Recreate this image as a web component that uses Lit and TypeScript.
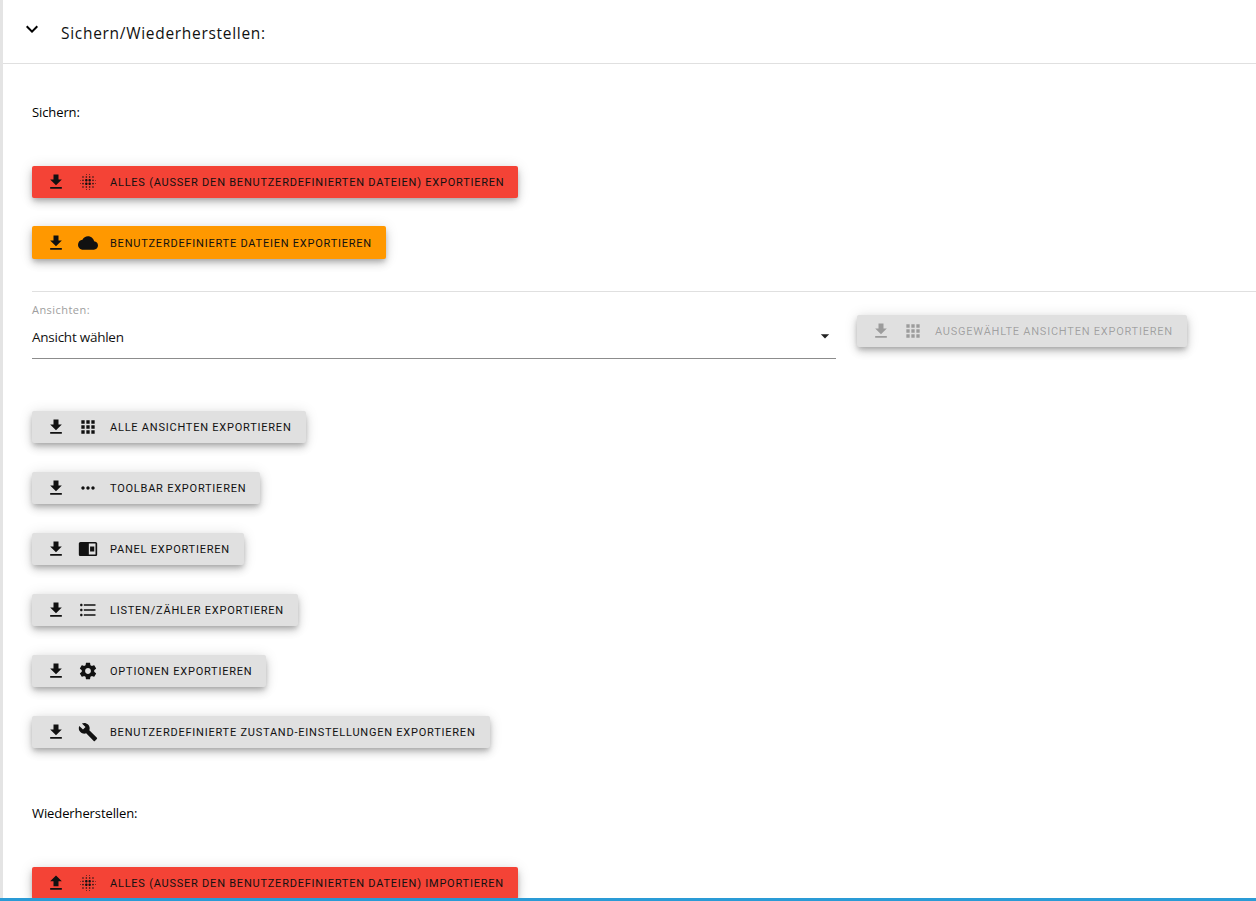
import { LitElement, html, css, svg } from "lit";
import { customElement } from "lit/decorators.js";

const P: Record<string, any> = {
  down: svg`<path d="M19 9h-4V3H9v6H5l7 7 7-7zM5 18v2h14v-2H5z"/>`,
  up: svg`<path d="M9 16h6v-6h4l-7-7-7 7h4zm-4 2h14v2H5z"/>`,
  cloud: svg`<path d="M19.35 10.04C18.67 6.59 15.64 4 12 4 9.11 4 6.6 5.64 5.35 8.04 2.34 8.36 0 10.91 0 14c0 3.31 2.69 6 6 6h13c2.76 0 5-2.24 5-5 0-2.64-2.05-4.78-4.65-4.96z"/>`,
  apps: svg`<path d="M4 8h4V4H4v4zm6 12h4v-4h-4v4zm-6 0h4v-4H4v4zm0-6h4v-4H4v4zm6 0h4v-4h-4v4zm6-10v4h4V4h-4zm-6 4h4V4h-4v4zm6 6h4v-4h-4v4zm0 6h4v-4h-4v4z"/>`,
  more: svg`<path d="M6 10c-1.1 0-2 .9-2 2s.9 2 2 2 2-.9 2-2-.9-2-2-2zm12 0c-1.1 0-2 .9-2 2s.9 2 2 2 2-.9 2-2-.9-2-2-2zm-6 0c-1.1 0-2 .9-2 2s.9 2 2 2 2-.9 2-2-.9-2-2-2z"/>`,
  panel: svg`<path fill-rule="evenodd" d="M3 3.5h18c1.1 0 2 .9 2 2v13c0 1.1-.9 2-2 2H3c-1.1 0-2-.9-2-2v-13c0-1.1.9-2 2-2zM13 5.5v13h8v-13h-8zM14.5 9h5v6h-5V9z"/>`,
  list: svg`<path d="M4 10.5c-.83 0-1.5.67-1.5 1.5s.67 1.5 1.5 1.5 1.5-.67 1.5-1.5-.67-1.5-1.5-1.5zm0-6c-.83 0-1.5.67-1.5 1.5S3.17 7.5 4 7.5 5.5 6.83 5.5 6 4.83 4.5 4 4.5zm0 12c-.83 0-1.5.68-1.5 1.5s.68 1.5 1.5 1.5 1.5-.68 1.5-1.5-.67-1.5-1.5-1.5zM7 19h14v-2H7v2zm0-6h14v-2H7v2zm0-8v2h14V5H7z"/>`,
  gear: svg`<path d="M19.43 12.98c.04-.32.07-.64.07-.98s-.03-.66-.07-.98l2.11-1.65c.19-.15.24-.42.12-.64l-2-3.46c-.12-.22-.39-.3-.61-.22l-2.49 1c-.52-.4-1.08-.73-1.69-.98l-.38-2.65C14.46 2.18 14.25 2 14 2h-4c-.25 0-.46.18-.49.42l-.38 2.65c-.61.25-1.17.59-1.69.98l-2.49-1c-.23-.09-.49 0-.61.22l-2 3.46c-.13.22-.07.49.12.64l2.11 1.65c-.04.32-.07.65-.07.98s.03.66.07.98l-2.11 1.65c-.19.15-.24.42-.12.64l2 3.46c.12.22.39.3.61.22l2.49-1c.52.4 1.08.73 1.69.98l.38 2.65c.03.24.24.42.49.42h4c.25 0 .46-.18.49-.42l.38-2.65c.61-.25 1.17-.59 1.69-.98l2.49 1c.23.09.49 0 .61-.22l2-3.46c.12-.22.07-.49-.12-.64l-2.11-1.65zM12 15.5c-1.93 0-3.5-1.57-3.5-3.5s1.57-3.5 3.5-3.5 3.5 1.57 3.5 3.5-1.57 3.5-3.5 3.5z"/>`,
  wrench: svg`<path d="M22.7 19l-9.1-9.1c.9-2.3.4-5-1.5-6.9-2-2-5-2.4-7.4-1.3L9 6 6 9 1.6 4.7C.4 7.1.9 10.1 2.9 12.1c1.9 1.9 4.6 2.4 6.9 1.5l9.1 9.1c.4.4 1 .4 1.4 0l2.3-2.3c.5-.4.5-1.1.1-1.4z"/>`,
  blur: svg`<path d="M6 13c-.55 0-1 .45-1 1s.45 1 1 1 1-.45 1-1-.45-1-1-1zm0 4c-.55 0-1 .45-1 1s.45 1 1 1 1-.45 1-1-.45-1-1-1zm0-8c-.55 0-1 .45-1 1s.45 1 1 1 1-.45 1-1-.45-1-1-1zm-3 .5c-.28 0-.5.22-.5.5s.22.5.5.5.5-.22.5-.5-.22-.5-.5-.5zM6 5c-.55 0-1 .45-1 1s.45 1 1 1 1-.45 1-1-.45-1-1-1zm15 5.5c.28 0 .5-.22.5-.5s-.22-.5-.5-.5-.5.22-.5.5.22.5.5.5zM14 7c.55 0 1-.45 1-1s-.45-1-1-1-1 .45-1 1 .45 1 1 1zm0-3.5c.28 0 .5-.22.5-.5s-.22-.5-.5-.5-.5.22-.5.5.22.5.5.5zm-11 10c-.28 0-.5.22-.5.5s.22.5.5.5.5-.22.5-.5-.22-.5-.5-.5zm7 7c-.28 0-.5.22-.5.5s.22.5.5.5.5-.22.5-.5-.22-.5-.5-.5zm0-17c.28 0 .5-.22.5-.5s-.22-.5-.5-.5-.5.22-.5.5.22.5.5.5zM10 7c.55 0 1-.45 1-1s-.45-1-1-1-1 .45-1 1 .45 1 1 1zm0 5.5c-.83 0-1.5.67-1.5 1.5s.67 1.5 1.5 1.5 1.5-.67 1.5-1.5-.67-1.5-1.5-1.5zm8 .5c-.55 0-1 .45-1 1s.45 1 1 1 1-.45 1-1-.45-1-1-1zm0 4c-.55 0-1 .45-1 1s.45 1 1 1 1-.45 1-1-.45-1-1-1zm0-8c-.55 0-1 .45-1 1s.45 1 1 1 1-.45 1-1-.45-1-1-1zm0-4c-.55 0-1 .45-1 1s.45 1 1 1 1-.45 1-1-.45-1-1-1zm3 8.5c-.28 0-.5.22-.5.5s.22.5.5.5.5-.22.5-.5-.22-.5-.5-.5zM14 17c-.55 0-1 .45-1 1s.45 1 1 1 1-.45 1-1-.45-1-1-1zm0 3.5c-.28 0-.5.22-.5.5s.22.5.5.5.5-.22.5-.5-.22-.5-.5-.5zm-4-12c-.83 0-1.5.67-1.5 1.5s.67 1.5 1.5 1.5 1.5-.67 1.5-1.5-.67-1.5-1.5-1.5zm0 8.5c-.55 0-1 .45-1 1s.45 1 1 1 1-.45 1-1-.45-1-1-1zm4-4.5c-.83 0-1.5.67-1.5 1.5s.67 1.5 1.5 1.5 1.5-.67 1.5-1.5-.67-1.5-1.5-1.5zm0-4c-.83 0-1.5.67-1.5 1.5s.67 1.5 1.5 1.5 1.5-.67 1.5-1.5-.67-1.5-1.5-1.5z"/>`,
  chevron: svg`<path d="M16.59 8.59L12 13.17 7.41 8.59 6 10l6 6 6-6z"/>`,
  caret: svg`<path d="M7 10l5 5 5-5z"/>`,
};

const icon = (n: string, cls = "ic") => html`<svg class=${cls} viewBox="0 0 24 24" fill="currentColor">${P[n]}</svg>`;

type B = { a: string; b: string; t: string; c?: string };
const GREY: B[] = [
  { a: "down", b: "apps", t: "Alle Ansichten exportieren" },
  { a: "down", b: "more", t: "Toolbar exportieren" },
  { a: "down", b: "panel", t: "Panel exportieren" },
  { a: "down", b: "list", t: "Listen/Zähler exportieren" },
  { a: "down", b: "gear", t: "Optionen exportieren" },
  { a: "down", b: "wrench", t: "Benutzerdefinierte Zustand-Einstellungen exportieren" },
];

@customElement("app-root")
export class AppRoot extends LitElement {
  static styles = css`
    :host { display: flex; flex-direction: column; height: 901px; overflow: hidden; background: #fff; color: #000; font-family: "Open Sans", "Noto Sans", sans-serif; }
    * { box-sizing: border-box; }
    .main { flex: 1; min-height: 0; overflow: hidden; border-left: 3px solid #e4e4e4; }
    .bar { height: 3px; flex: none; background: #2a9bd6; }
    .head { height: 64px; border-bottom: 1px solid #e0e0e0; display: flex; align-items: center; padding-left: 17px; }
    .chev { width: 24px; height: 24px; margin-top: -6px; flex: none; }
    .title { margin-left: 17px; font-size: 15.5px; letter-spacing: .7px; color: #111; margin-top: 2px; }
    .body { padding: 0 0 0 29px; }
    .label { font-size: 13px; line-height: 18px; height: 18px; letter-spacing: -.1px; }
    .l1 { margin-top: 39px; margin-bottom: 45px; }
    .l2 { margin-top: 56px; margin-bottom: 45px; }
    .btn { display: inline-flex; align-items: center; height: 32px; padding: 0 14px 0 14px; border-radius: 2px; border: 0; font-family: Roboto, sans-serif; font-size: 11px; letter-spacing: .77px; text-transform: uppercase; white-space: nowrap; background: #e0e0e0; color: #111;
      box-shadow: 0 3px 5px -1px rgba(0,0,0,.2), 0 5px 8px 0 rgba(0,0,0,.14), 0 1px 14px 0 rgba(0,0,0,.12); }
    .ic { width: 20px; height: 20px; flex: none; }
    .ic + .ic { margin-left: 12px; }
    .ic + span { margin-left: 12px; }
    .red { background: #f44336; }
    .orange { background: #ff9800; height: 33px; padding-top: 1px; }
    .dis { background: #e0e0e0; color: rgba(0,0,0,.3); }
    .stack { display: flex; flex-direction: column; align-items: flex-start; }
    .g1 { gap: 28px; }
    .g2 { gap: 29px; margin-top: 52px; }
    hr { border: 0; border-top: 1px solid #e0e0e0; margin: 32px 0 0 0; }
    .row { display: flex; align-items: flex-start; gap: 21px; margin-top: 12px; }
    .sel { width: 804px; height: 55px; border-bottom: 1px solid #8c8c8c; position: relative; flex: none; }
    .sel small { display: block; font-size: 11px; line-height: 11px; color: #9e9e9e; letter-spacing: .45px; }
    .sel div { font-size: 13.5px; line-height: 20px; margin-top: 12px; color: #111; letter-spacing: -.25px; }
    .caret { position: absolute; right: 1px; top: 22px; width: 20px; height: 20px; color: #222; }
    .row .btn { margin-top: 11px; }
  `;

  render() {
    const btn = (b: B) => html`<button class="btn ${b.c ?? ""}">${icon(b.a)}${icon(b.b)}<span>${b.t}</span></button>`;
    return html`
      <div class="main">
        <div class="head">${icon("chevron", "chev")}<span class="title">Sichern/Wiederherstellen:</span></div>
        <div class="body">
          <div class="label l1">Sichern:</div>
          <div class="stack g1">
            ${btn({ a: "down", b: "blur", t: "Alles (ausser den benutzerdefinierten Dateien) exportieren", c: "red" })}
            ${btn({ a: "down", b: "cloud", t: "Benutzerdefinierte Dateien exportieren", c: "orange" })}
          </div>
          <hr />
          <div class="row">
            <div class="sel"><small>Ansichten:</small><div>Ansicht wählen</div>${icon("caret", "caret")}</div>
            ${btn({ a: "down", b: "apps", t: "Ausgewählte Ansichten exportieren", c: "dis" })}
          </div>
          <div class="stack g2">${GREY.map(btn)}</div>
          <div class="label l2">Wiederherstellen:</div>
          ${btn({ a: "up", b: "blur", t: "Alles (ausser den benutzerdefinierten Dateien) importieren", c: "red" })}
        </div>
      </div>
      <div class="bar"></div>
    `;
  }
}
